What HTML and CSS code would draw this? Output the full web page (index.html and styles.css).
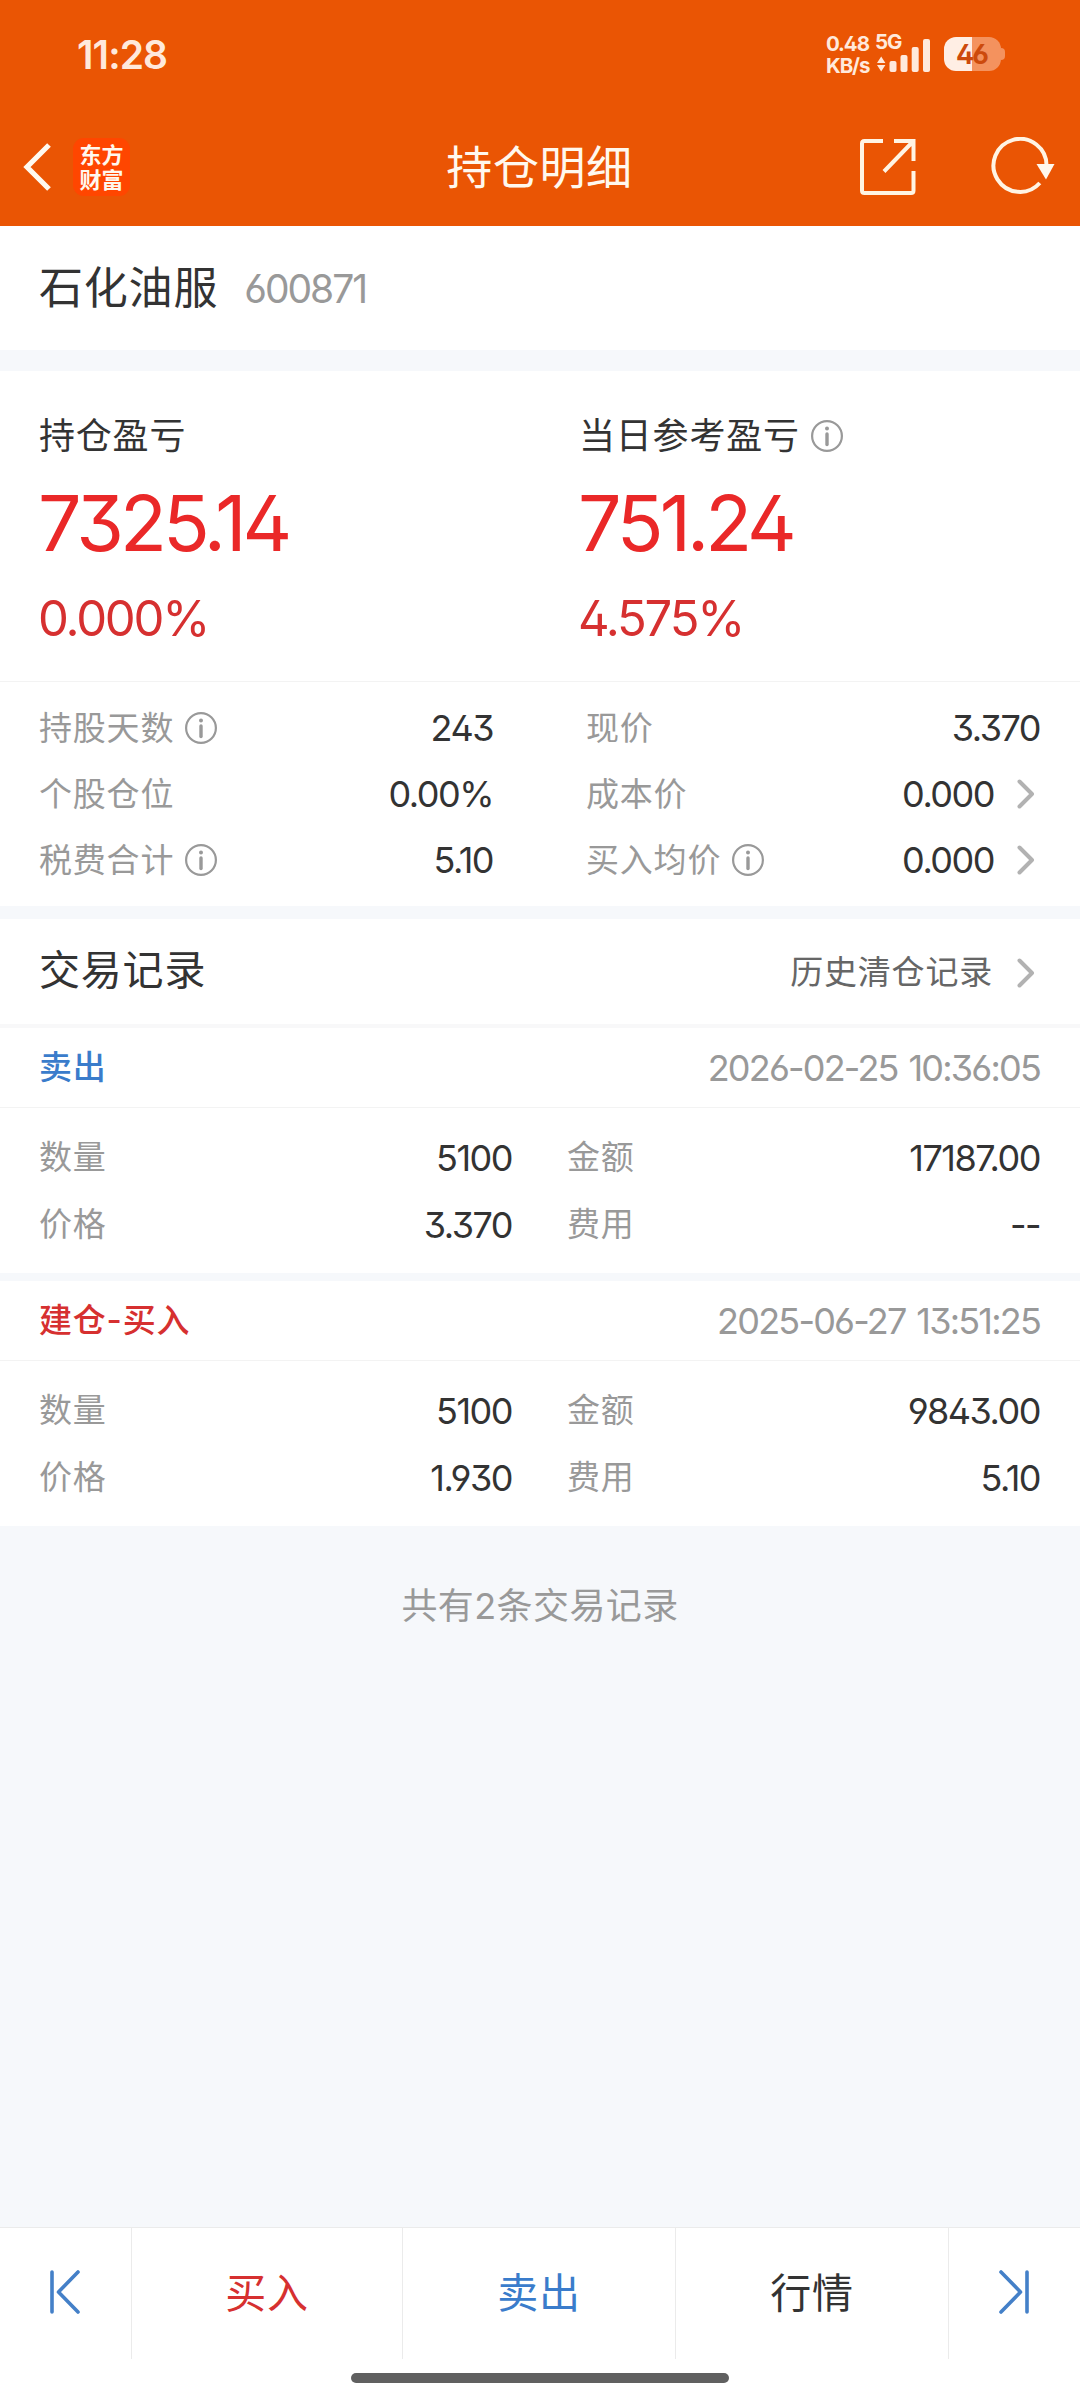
FILE: index.html
```html
<!DOCTYPE html>
<html lang="zh-CN">
<head>
<meta charset="utf-8">
<title>持仓明细</title>
<link rel="stylesheet" href="styles.css">
</head>
<body>
<svg class="defs" width="0" height="0">
  <symbol id="info" viewBox="0 0 32 32">
    <circle cx="16" cy="16" r="14.9" fill="none" stroke="currentColor" stroke-width="2.2"/>
    <circle cx="16" cy="8.4" r="2" fill="currentColor"/>
    <path d="M16 14v10.5" fill="none" stroke="currentColor" stroke-width="3.4" stroke-linecap="round"/>
  </symbol>
  <symbol id="chevron" viewBox="0 0 18 30">
    <path d="M2.5 2.5 15 15 2.5 27.5" fill="none" stroke="currentColor" stroke-width="4" stroke-linecap="round" stroke-linejoin="round"/>
  </symbol>
</svg>
<div class="screen">
  <header class="header">
    <div class="status">
      <span class="clock">11:28</span>
      <div class="indicators">
        <div class="speed"><span>0.48</span><span>KB/s</span></div>
        <div class="signal">
          <span class="network">5G</span>
          <svg class="bars" width="56" height="36" viewBox="0 0 56 36"><path d="M7.2 20.500 11.400 27H3zM7.200 35.500 3 29h8.400z"/><rect x="15.500" y="25" width="7" height="11" rx="2"/><rect x="26.500" y="19" width="7" height="17" rx="2"/><rect x="37.700" y="11" width="7" height="25" rx="2"/><rect x="49" y="3" width="7" height="33" rx="2"/></svg>
        </div>
        <div class="battery"><span>46</span></div>
      </div>
    </div>
    <nav class="appbar">
      <div class="lead">
        <svg width="30" height="50" viewBox="0 0 30 50"><path d="M27 3 5 25l22 22" fill="none" stroke="#fffaf0" stroke-width="5.200"/></svg>
        <div class="logo"><span>东方</span><span>财富</span></div>
      </div>
      <h1>持仓明细</h1>
      <div class="actions">
        <svg width="58" height="58" viewBox="0 0 58 58" fill="none" stroke="#fff4e4" stroke-width="4"><path d="M24 3H5.500Q3 3 3 5.500v47Q3 55 5.500 55h46.500Q54.500 55 54.500 52.500V33"/><path d="M35 3h19.500v20M53 4.500 25 33.500"/></svg>
        <svg width="66" height="60" viewBox="0 0 66 60"><path d="M48.800 46A26.500 26.500 0 1 1 55.500 29" fill="none" stroke="#fff4e4" stroke-width="4"/><path d="M45.500 27h18L55 42.500z" fill="#fff8ee"/></svg>
      </div>
    </nav>
  </header>

  <section class="stock"><h2>石化油服</h2><span class="code">600871</span></section>

  <section class="profit">
    <div class="total">
      <div class="caption">持仓盈亏</div>
      <div class="amount">7325.14</div>
      <div class="rate">0.000%</div>
    </div>
    <div class="total">
      <div class="caption">当日参考盈亏<svg class="info"><use href="#info"/></svg></div>
      <div class="amount">751.24</div>
      <div class="rate">4.575%</div>
    </div>
  </section>

  <section class="facts">
    <div class="fact"><label>持股天数<svg class="info"><use href="#info"/></svg></label><b>243</b></div>
    <div class="fact"><label>现价</label><b>3.370</b></div>
    <div class="fact"><label>个股仓位</label><b>0.00%</b></div>
    <div class="fact"><label>成本价</label><b>0.000</b><svg class="chevron"><use href="#chevron"/></svg></div>
    <div class="fact"><label>税费合计<svg class="info"><use href="#info"/></svg></label><b>5.10</b></div>
    <div class="fact"><label>买入均价<svg class="info"><use href="#info"/></svg></label><b>0.000</b><svg class="chevron"><use href="#chevron"/></svg></div>
  </section>

  <section class="records-head">
    <h3>交易记录</h3>
    <a class="history">历史清仓记录<svg class="chevron"><use href="#chevron"/></svg></a>
  </section>

  <article class="record">
    <div class="record-head"><span class="sell">卖出</span><time>2026-02-25 10:36:05</time></div>
    <div class="record-grid">
      <div class="cell"><label>数量</label><b>5100</b></div>
      <div class="cell"><label>金额</label><b>17187.00</b></div>
      <div class="cell"><label>价格</label><b>3.370</b></div>
      <div class="cell"><label>费用</label><b class="dash">--</b></div>
    </div>
  </article>
  <article class="record">
    <div class="record-head"><span class="buy">建仓-买入</span><time>2025-06-27 13:51:25</time></div>
    <div class="record-grid">
      <div class="cell"><label>数量</label><b>5100</b></div>
      <div class="cell"><label>金额</label><b>9843.00</b></div>
      <div class="cell"><label>价格</label><b>1.930</b></div>
      <div class="cell"><label>费用</label><b>5.10</b></div>
    </div>
  </article>
  <p class="count">共有2条交易记录</p>

  <footer class="bottom">
    <div class="tabs">
      <div class="tab step"><svg width="32" height="44" viewBox="0 0 32 44"><path d="M3 2v40M29 2 9.500 22 29 42"/></svg></div>
      <div class="tab buy">买入</div>
      <div class="tab sell">卖出</div>
      <div class="tab">行情</div>
      <div class="tab step"><svg width="32" height="44" viewBox="0 0 32 44"><path d="M29 2v40M3 2l19.500 20L3 42"/></svg></div>
    </div>
    <div class="handle"></div>
  </footer>
</div>
</body>
</html>
```
FILE: styles.css
```css
* { box-sizing: border-box; margin: 0; padding: 0; }
body {
  background: #f6f8fb;
  color: #333;
  font-family: Inter, "Noto Sans CJK SC", sans-serif;
  font-feature-settings: "cv09", "ss01", "cv03", "cv04";
  font-size: 33px;
  letter-spacing: 0.8px;
  line-height: 1;
}
h1, h2, h3, b { font-weight: 400; }
.defs { position: absolute; }
.screen { width: 1080px; height: 2400px; display: flex; flex-direction: column; }

.header { height: 226px; background: #ea5504; color: #fff8ee; }
.status { height: 108px; padding: 0 75px 0 77px; display: flex; align-items: center; justify-content: space-between; color: #ffe9dc; }
.clock { font-size: 39px; font-weight: 600; letter-spacing: -0.9px; }
.indicators { display: flex; align-items: center; }
.speed { width: 48px; display: flex; flex-direction: column; gap: 1px; font-size: 20.5px; line-height: 21px; font-weight: 700; letter-spacing: -1.1px; }
.signal { position: relative; width: 56px; height: 36px; }
.network { position: absolute; left: 1px; top: -4px; font-size: 20.5px; font-weight: 700; letter-spacing: -1.2px; }
.bars { display: block; fill: #ffe9dc; }
.battery { position: relative; width: 57px; height: 34px; margin: 0 4px 0 14px; padding-right: 2px; border-radius: 12px; background: linear-gradient(90deg, #ffeee4 0 28px, #f4925e 28px); display: flex; align-items: center; justify-content: center; color: #cd4a0c; font-size: 27px; font-weight: 700; letter-spacing: -2px; }
.battery::after { content: ""; position: absolute; left: 57px; top: 11px; width: 4px; height: 12px; border-radius: 0 4px 4px 0; background: #f4925e; }
.appbar { height: 118px; padding: 0 23px 0 22px; display: grid; grid-template-columns: 1fr auto 1fr; align-items: center; }
.lead { display: flex; align-items: center; gap: 21px; }
.logo { width: 57px; height: 58px; border-radius: 11px; background: #ff4600; display: flex; flex-direction: column; align-items: center; justify-content: center; gap: 3px; font-size: 22px; font-weight: 700; line-height: 22px; letter-spacing: 0; }
.appbar h1 { font-size: 46px; letter-spacing: 0.6px; }
.actions { display: flex; justify-content: flex-end; align-items: center; gap: 74px; }

.stock { height: 124px; padding: 0 40px 0 39px; background: #fff; display: flex; align-items: center; gap: 26px; }
.stock h2 { font-size: 44px; }
.code { color: #999; font-size: 39px; letter-spacing: -2px; }

.profit { height: 311px; margin-top: 21px; padding: 46px 0 0 39px; background: #fff; border-bottom: 1px solid #f3f3f3; display: grid; grid-template-columns: 540px 1fr; }
.caption { height: 37px; display: flex; align-items: center; gap: 11px; font-size: 36px; }
.amount { margin: 31px 0 0 -1px; height: 77px; line-height: 77px; font-size: 77px; color: #ea2828; letter-spacing: -4px; }
.rate { margin: 32px 0 0 -1px; height: 50px; line-height: 50px; font-size: 49px; color: #d63030; letter-spacing: -2.2px; }
.info { width: 32px; height: 32px; color: #999; flex: none; }
.chevron { width: 18px; height: 30px; color: #b2b2b2; flex: none; }

.facts { height: 224px; padding: 13px 40px 0 39px; background: #fff; display: grid; grid-template-columns: 454px 454px; column-gap: 93px; grid-auto-rows: 66px; }
.fact { display: flex; align-items: center; }
label { flex: 1; display: flex; align-items: center; gap: 11px; color: #999; }
b { font-size: 36px; letter-spacing: -1.5px; color: #333; }
.fact .chevron { margin: 0 5px 0 23px; }

.records-head { height: 109px; margin-top: 13px; padding: 0 45px 3px 39px; background: #fff; border-bottom: 4px solid #f8f8f9; display: flex; align-items: center; justify-content: space-between; }
.records-head h3 { font-size: 41px; }
.history { display: flex; align-items: center; gap: 24px; color: #666; padding-top: 5px; }

.record { height: 245px; background: #fff; }
.record + .record { margin-top: 8px; }
.record-head { height: 80px; padding: 0 40px 0 39px; border-bottom: 1px solid #f3f3f3; display: flex; align-items: center; justify-content: space-between; }
.record-head span { font-weight: 500; }
time { color: #999; font-size: 36px; letter-spacing: -1.8px; word-spacing: 2.5px; }
.record-grid { padding: 16px 40px 0 39px; display: grid; grid-template-columns: 473px 473px; column-gap: 55px; grid-auto-rows: 67px; }
.cell { display: flex; align-items: center; }
.sell { color: #3a7ccb; }
.buy { color: #d63030; }
.count { margin-top: 62px; text-align: center; font-size: 36px; color: #999; letter-spacing: 0.4px; }

.bottom { margin-top: auto; height: 173px; background: #fff; border-top: 1px solid #ebebeb; }
.tabs { height: 131px; display: grid; grid-template-columns: 132px 271px 273px 273px 131px; }
.tab { display: flex; align-items: center; justify-content: center; border-right: 1px solid #ebebeb; font-size: 41px; }
.tab:last-child { border-right: 0; }
.step { padding: 0 2px 4px 0; }
.step svg { fill: none; stroke: #4480c8; stroke-width: 3.6; stroke-linecap: round; stroke-linejoin: round; }
.handle { width: 378px; height: 10px; margin: 14px auto 0; border-radius: 5px; background: #606060; }
```
